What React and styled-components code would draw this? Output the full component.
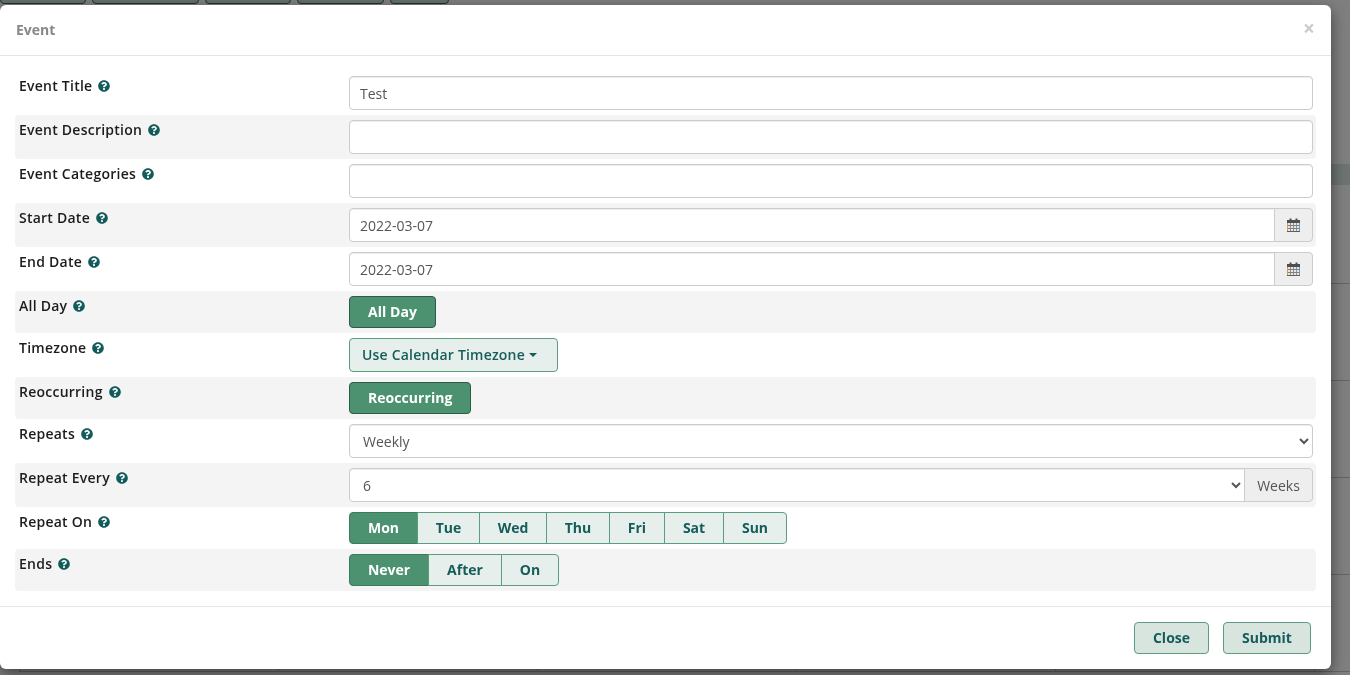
import React from 'react'
import styled, { createGlobalStyle } from 'styled-components'
import { FaQuestionCircle } from 'react-icons/fa'

const GlobalStyle = createGlobalStyle`
  html, body {
    margin: 0;
    height: 100%;
    overflow: hidden;
    background: #fff;
    font-family: "Open Sans", "Liberation Sans", sans-serif;
    font-size: 14px;
    color: #222;
  }
  * { box-sizing: border-box; }
`

const Page = styled.div`
  height: 675px;
  overflow: hidden;
`

const Toolbar = styled.div`
  display: flex;
  gap: 6px;
  height: 164px;
  margin-top: -28px;
`

const ToolButton = styled.div`
  width: ${(p) => p.$w}px;
  height: 32px;
  background: #cfdcd7;
  border: 1px solid #2d6b58;
  border-radius: 4px;
`

const CalendarHead = styled.div`
  height: 21px;
  margin-top: 28px;
  background: #d9e6e0;
`

const CalendarGrid = styled.div`
  display: grid;
  grid-template-columns: repeat(6, 259px);
  grid-auto-rows: 97px;
  padding: 2px 0 0 19px;
`

const CalendarCell = styled.div`
  border-bottom: 1px solid #c8c8c8;
  border-left: 1px solid #c8c8c8;
`

const Backdrop = styled.div`
  position: fixed;
  inset: 0;
  background: rgba(0, 0, 0, 0.5);
`

const Modal = styled.div`
  position: fixed;
  top: 5px;
  left: 0;
  width: 1331px;
  height: 664px;
  display: flex;
  flex-direction: column;
  background: #fff;
  border-radius: 6px;
  box-shadow: 0 5px 15px rgba(0, 0, 0, 0.5);
`

const ModalHeader = styled.div`
  height: 51px;
  flex: none;
  display: flex;
  align-items: center;
  justify-content: space-between;
  padding: 0 16px 2px;
  border-bottom: 1px solid #e5e5e5;
`

const ModalTitle = styled.h4`
  margin: 0;
  font-size: 14px;
  font-weight: 700;
  color: #888;
`

const CloseX = styled.span`
  font-size: 21px;
  font-weight: 700;
  line-height: 1;
  color: #000;
  opacity: 0.2;
  margin-top: -2px;
`

const ModalBody = styled.div`
  flex: 1;
  padding: 15px;
`

const Row = styled.div`
  display: grid;
  grid-template-columns: 330px 1fr;
  padding: 5px 3px 5px 4px;
  border-radius: 4px;
  background: ${(p) => (p.$shade ? '#f4f4f4' : 'transparent')};
`

const Label = styled.label`
  display: flex;
  align-items: center;
  height: 20px;
  padding-bottom: 2px;
  gap: 6px;
  font-weight: 600;
  font-size: 14px;
  letter-spacing: 0.24px;
  color: #1c1c1c;

  svg {
    width: 12px;
    height: 12px;
    margin-top: 2px;
    color: #125b5b;
  }
`

const Input = styled.input`
  display: block;
  width: 100%;
  height: 34px;
  padding: 6px 10px;
  font: inherit;
  color: #555;
  background: #fff;
  border: 1px solid #ccc;
  border-radius: 4px;
  box-shadow: inset 0 1px 1px rgba(0, 0, 0, 0.075);
  outline: none;
`

const InputGroup = styled.div`
  display: flex;

  input, select {
    flex: 1;
    min-width: 0;
    border-radius: 4px 0 0 4px;
  }
`

const Addon = styled.span`
  display: flex;
  align-items: center;
  justify-content: center;
  flex: none;
  width: ${(p) => p.$w}px;
  height: 34px;
  margin-left: -1px;
  color: #555;
  background: #eee;
  border: 1px solid #ccc;
  border-radius: 0 4px 4px 0;
`

const Select = styled.select`
  display: block;
  width: 100%;
  height: 34px;
  padding: 6px 9px;
  font: inherit;
  color: #555;
  background: #fff;
  border: 1px solid #ccc;
  border-radius: 4px;
  box-shadow: inset 0 1px 1px rgba(0, 0, 0, 0.075);
  outline: none;
`

const Toggle = styled.button`
  display: block;
  height: 32px;
  padding: 0 18px 2px;
  font: inherit;
  font-weight: 700;
  letter-spacing: 0.05px;
  color: #fff;
  background: #4c9270;
  border: 1px solid #2b5c47;
  border-radius: 4px;
`

const Dropdown = styled.button`
  display: flex;
  align-items: center;
  gap: 4px;
  height: 34px;
  padding: 0 20px 2px 12px;
  font: inherit;
  font-weight: 600;
  letter-spacing: 0.2px;
  color: #155d5a;
  background: #e6efeb;
  border: 1px solid #5a9e80;
  border-radius: 4px;
`

const Caret = styled.span`
  width: 0;
  height: 0;
  margin: 2px 0 0 0;
  border-top: 4px solid #155d5a;
  border-left: 4px solid transparent;
  border-right: 4px solid transparent;
`

const Segments = styled.div`
  display: flex;
  height: 32px;
`

const Segment = styled.button`
  width: ${(p) => p.$w}px;
  height: 32px;
  margin-left: -1px;
  padding: 0 0 2px;
  font: inherit;
  font-weight: 700;
  color: ${(p) => (p.$on ? '#fff' : '#155d5a')};
  background: ${(p) => (p.$on ? '#4c9270' : '#e6efeb')};
  border: 1px solid ${(p) => (p.$on ? '#3a7a5d' : '#5a9e80')};

  &:first-child {
    margin-left: 0;
    border-radius: 4px 0 0 4px;
  }
  &:last-child {
    border-radius: 0 4px 4px 0;
  }
`

const ModalFooter = styled.div`
  flex: none;
  display: flex;
  justify-content: flex-end;
  gap: 14px;
  height: 63px;
  padding: 15px 20px 0 0;
  border-top: 1px solid #e5e5e5;
`

const FooterButton = styled.button`
  height: 32px;
  width: ${(p) => p.$w}px;
  padding: 0 0 2px;
  font: inherit;
  font-weight: 700;
  color: #155d5a;
  background: #d8e5df;
  border: 1px solid #5a9e80;
  border-radius: 4px;
`

function CalendarIcon() {
  return (
    <svg width="13" height="14" viewBox="0 0 13 14">
      <rect x="0.5" y="2.5" width="12" height="11" fill="#ece6da" stroke="#5f5f5f" />
      <rect x="0" y="2" width="13" height="3" fill="#4f4f4f" />
      <rect x="2.5" y="0.5" width="2" height="3" fill="#4f4f4f" />
      <rect x="8.5" y="0.5" width="2" height="3" fill="#4f4f4f" />
      <path d="M3.5 5v8M6.5 5v8M9.5 5v8" stroke="#7b95b8" fill="none" />
      <path d="M1 7.5h11M1 10.5h11" stroke="#85807a" fill="none" />
      <path d="M0.5 5v8" stroke="#d09a50" fill="none" />
      <path d="M12.5 5v8" stroke="#6c96c4" fill="none" />
    </svg>
  )
}

const Field = ({ label, shade, children }) => (
  <Row $shade={shade}>
    <Label>
      {label}
      <FaQuestionCircle />
    </Label>
    <div>{children}</div>
  </Row>
)

const days = [['Mon', 69], ['Tue', 63], ['Wed', 68], ['Thu', 64], ['Fri', 56], ['Sat', 60], ['Sun', 64]]
const ends = [['Never', 80], ['After', 74], ['On', 58]]
const toolButtons = [86, 107, 86, 87, 59]

function App() {
  return (
    <Page>
      <GlobalStyle />
      <Toolbar>
        {toolButtons.map((w, i) => (
          <ToolButton key={i} $w={w} />
        ))}
      </Toolbar>
      <CalendarHead />
      <CalendarGrid>
        {Array.from({ length: 30 }).map((_, i) => (
          <CalendarCell key={i} />
        ))}
      </CalendarGrid>

      <Backdrop />
      <Modal>
        <ModalHeader>
          <ModalTitle>Event</ModalTitle>
          <CloseX>×</CloseX>
        </ModalHeader>
        <ModalBody>
          <Field label="Event Title">
            <Input readOnly value="Test" />
          </Field>
          <Field label="Event Description" shade>
            <Input readOnly value="" />
          </Field>
          <Field label="Event Categories">
            <Input readOnly value="" />
          </Field>
          <Field label="Start Date" shade>
            <InputGroup>
              <Input readOnly value="2022-03-07" />
              <Addon $w={39}><CalendarIcon /></Addon>
            </InputGroup>
          </Field>
          <Field label="End Date">
            <InputGroup>
              <Input readOnly value="2022-03-07" />
              <Addon $w={39}><CalendarIcon /></Addon>
            </InputGroup>
          </Field>
          <Field label="All Day" shade>
            <Toggle>All Day</Toggle>
          </Field>
          <Field label="Timezone">
            <Dropdown>Use Calendar Timezone<Caret /></Dropdown>
          </Field>
          <Field label="Reoccurring" shade>
            <Toggle>Reoccurring</Toggle>
          </Field>
          <Field label="Repeats">
            <Select defaultValue="Weekly">
              <option>Daily</option>
              <option>Weekly</option>
              <option>Monthly</option>
            </Select>
          </Field>
          <Field label="Repeat Every" shade>
            <InputGroup>
              <Select defaultValue="6">
                {[1, 2, 3, 4, 5, 6, 7, 8].map((n) => (
                  <option key={n}>{n}</option>
                ))}
              </Select>
              <Addon $w={69}>Weeks</Addon>
            </InputGroup>
          </Field>
          <Field label="Repeat On">
            <Segments>
              {days.map(([d, w], i) => (
                <Segment key={d} $w={w} $on={i === 0}>{d}</Segment>
              ))}
            </Segments>
          </Field>
          <Field label="Ends" shade>
            <Segments>
              {ends.map(([d, w], i) => (
                <Segment key={d} $w={w} $on={i === 0}>{d}</Segment>
              ))}
            </Segments>
          </Field>
        </ModalBody>
        <ModalFooter>
          <FooterButton $w={75}>Close</FooterButton>
          <FooterButton $w={88}>Submit</FooterButton>
        </ModalFooter>
      </Modal>
    </Page>
  )
}

export default App
